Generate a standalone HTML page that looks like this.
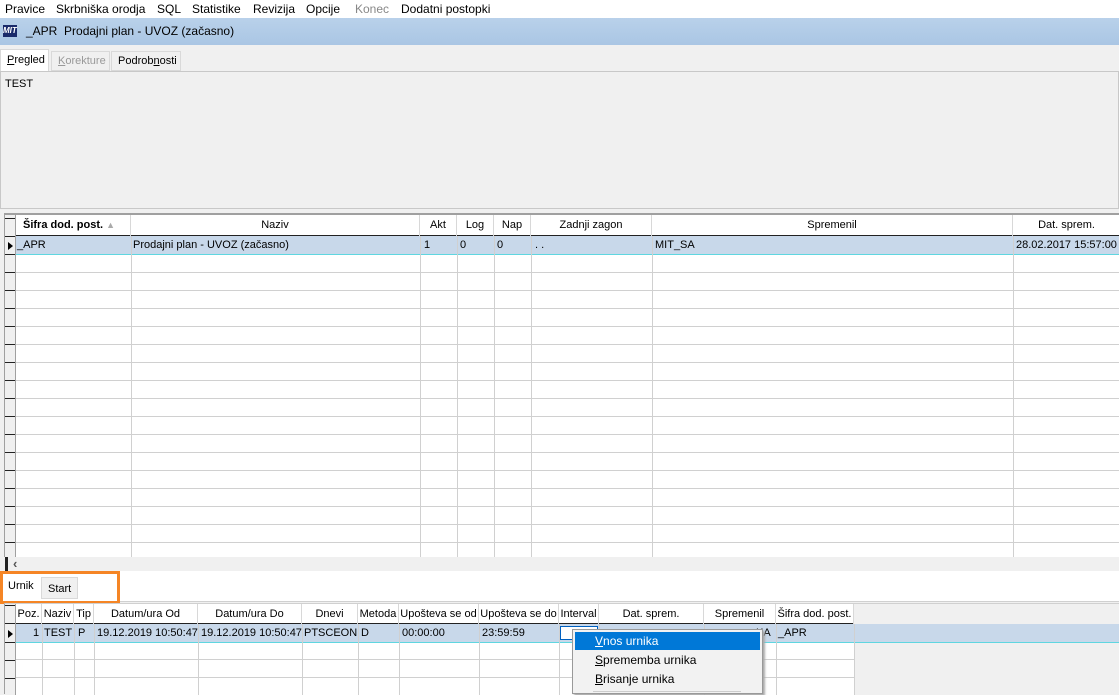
<!DOCTYPE html><html><head><style>
*{margin:0;padding:0;box-sizing:border-box}
body{width:1119px;height:694px;overflow:hidden;background:#f0f0f0;font-family:"Liberation Sans",Tahoma,sans-serif;font-size:12px;color:#000;position:relative}
.a{position:absolute;white-space:nowrap}
.vl{position:absolute;width:1px;background:#d0d0d0}
.hd{position:absolute;top:0;height:21px;line-height:21px;text-align:center;font-size:11px;border-right:1px solid #d8d8d8}
</style></head><body>
<div class="a" style="left:0;top:0;width:1119px;height:18px;background:#fff;font-size:12px;line-height:18px">
<span class="a" style="left:5px">Pravice</span><span class="a" style="left:56px">Skrbniška orodja</span><span class="a" style="left:157px">SQL</span><span class="a" style="left:192px">Statistike</span><span class="a" style="left:253px">Revizija</span><span class="a" style="left:306px">Opcije</span><span class="a" style="left:355px;color:#888">Konec</span><span class="a" style="left:401px">Dodatni postopki</span></div>
<div class="a" style="left:0;top:18px;width:1119px;height:27px;background:linear-gradient(#b9d1ea,#aac6e4);line-height:27px">
<div class="a" style="left:3px;top:7px;width:14px;height:12px;background:#1a2a6a;color:#fff;font-size:8px;font-weight:bold;line-height:12px;font-style:italic">MIT</div>
<span class="a" style="left:26px">_APR&nbsp; Prodajni plan - UVOZ (začasno)</span></div>
<div class="a" style="left:0;top:49px;width:49px;height:22px;background:#fff;border:1px solid #d9d9d9;border-bottom:none;line-height:20px;padding-left:6px;font-size:11px"><u>P</u>regled</div>
<div class="a" style="left:51px;top:51px;width:59px;height:20px;border:1px solid #d9d9d9;line-height:18px;padding-left:6px;color:#999;font-size:11px"><u>K</u>orekture</div>
<div class="a" style="left:111px;top:51px;width:70px;height:20px;border:1px solid #d9d9d9;line-height:18px;padding-left:6px;font-size:11px">Podrob<u>n</u>osti</div>
<div class="a" style="left:0;top:71px;width:1119px;height:138px;border:1px solid #c8c8c8;background:#f0f0f0"></div>
<span class="a" style="left:5px;top:78px;font-size:11px">TEST</span>
<div class="a" style="left:4px;top:213px;width:1115px;height:344px;background:#fff;border-top:2px solid #a0a0a0;border-left:1px solid #a0a0a0">
 <div class="a" style="left:0;top:0;width:11px;height:342px;background:#f0f0f0;border-right:1px solid #a0a0a0;background-image:repeating-linear-gradient(#f0f0f0 0 17px,#222 17px 18px);background-position:0 22px"></div>
 <div class="a" style="left:11px;top:0;width:1104px;height:21px;border-bottom:1px solid #222;background:#fff"></div>
 <div class="hd" style="left:11px;width:115px;text-align:left;padding-left:7px;font-weight:bold">Šifra dod. post. <span style="color:#aaa;font-size:9px">▲</span></div>
 <div class="hd" style="left:126px;width:289px">Naziv</div>
 <div class="hd" style="left:415px;width:37px">Akt</div>
 <div class="hd" style="left:452px;width:37px">Log</div>
 <div class="hd" style="left:489px;width:37px">Nap</div>
 <div class="hd" style="left:526px;width:121px">Zadnji zagon</div>
 <div class="hd" style="left:647px;width:361px">Spremenil</div>
 <div class="hd" style="left:1008px;width:107px;border:none">Dat. sprem.</div>
 <div class="a" style="left:11px;top:40px;width:1104px;height:302px;background:repeating-linear-gradient(#fff 0 17px,#d0d0d0 17px 18px)"></div>
 <div class="a" style="left:11px;top:21px;width:1104px;height:19px;background:#c8d8ea;border-bottom:1px solid #5fd6e0;font-size:11px;line-height:18px">
  <span class="a" style="left:1px">_APR</span><span class="a" style="left:117px">Prodajni plan - UVOZ (začasno)</span><span class="a" style="left:408px">1</span><span class="a" style="left:444px">0</span><span class="a" style="left:481px">0</span><span class="a" style="left:519px">. .</span><span class="a" style="left:639px">MIT_SA</span><span class="a" style="left:1000px">28.02.2017 15:57:00</span></div>
 <div class="a" style="left:3px;top:27px;width:0;height:0;border-left:5px solid #000;border-top:4px solid transparent;border-bottom:4px solid transparent"></div>
 <div class="vl" style="left:126px;top:21px;height:321px"></div><div class="vl" style="left:415px;top:21px;height:321px"></div><div class="vl" style="left:452px;top:21px;height:321px"></div><div class="vl" style="left:489px;top:21px;height:321px"></div><div class="vl" style="left:526px;top:21px;height:321px"></div><div class="vl" style="left:647px;top:21px;height:321px"></div><div class="vl" style="left:1008px;top:21px;height:321px"></div>
</div>
<div class="a" style="left:5px;top:557px;width:1114px;height:14px;background:#f0f0f0;border-left:3px solid #222"></div>
<span class="a" style="left:13px;top:556px;font-size:13px;font-weight:bold;color:#555">‹</span>
<div class="a" style="left:0;top:571px;width:1119px;height:31px;background:#fff;border-bottom:1px solid #d0d0d0"></div>
<span class="a" style="left:8px;top:580px;font-size:11px">Urnik</span>
<div class="a" style="left:41px;top:577px;width:37px;height:22px;background:#f0f0f0;border:1px solid #d9d9d9;font-size:11px;line-height:22px;padding-left:6px">Start</div>
<div class="a" style="left:0;top:571px;width:120px;height:33px;border:3px solid #f58525"></div>
<div class="a" style="left:4px;top:603px;width:1115px;height:91px;background:#f0f0f0;border-left:1px solid #a0a0a0;border-top:1px solid #d0d0d0">
 <div class="a" style="left:0;top:0;width:11px;height:91px;background:#f0f0f0;border-right:1px solid #a0a0a0;background-image:repeating-linear-gradient(#f0f0f0 0 17px,#222 17px 18px);background-position:0 21px"></div>
 <div class="a" style="left:11px;top:0;width:838px;height:20px;border-bottom:1px solid #222;background:#fff"></div>
 <div class="hd" style="left:11px;width:26px;font-size:11px;height:20px;line-height:20px">Poz.</div>
 <div class="hd" style="left:37px;width:32px;height:20px;line-height:20px">Naziv</div>
 <div class="hd" style="left:69px;width:20px;height:20px;line-height:20px">Tip</div>
 <div class="hd" style="left:89px;width:104px;height:20px;line-height:20px">Datum/ura Od</div>
 <div class="hd" style="left:193px;width:104px;height:20px;line-height:20px">Datum/ura Do</div>
 <div class="hd" style="left:297px;width:56px;height:20px;line-height:20px">Dnevi</div>
 <div class="hd" style="left:353px;width:41px;height:20px;line-height:20px">Metoda</div>
 <div class="hd" style="left:394px;width:80px;height:20px;line-height:20px">Upošteva se od</div>
 <div class="hd" style="left:474px;width:80px;height:20px;line-height:20px">Upošteva se do</div>
 <div class="hd" style="left:554px;width:40px;height:20px;line-height:20px">Interval</div>
 <div class="hd" style="left:594px;width:105px;height:20px;line-height:20px">Dat. sprem.</div>
 <div class="hd" style="left:699px;width:72px;height:20px;line-height:20px">Spremenil</div>
 <div class="hd" style="left:771px;width:78px;height:20px;line-height:20px">Šifra dod. post.</div>
 <div class="a" style="left:11px;top:38px;width:838px;height:53px;background:repeating-linear-gradient(#fff 0 17px,#d0d0d0 17px 18px)"></div>
 <div class="a" style="left:11px;top:20px;width:1104px;height:19px;background:#c8d8ea;border-bottom:1px solid #5fd6e0;font-size:11px;line-height:18px">
  <span class="a" style="left:17px">1</span><span class="a" style="left:28px">TEST</span><span class="a" style="left:62px">P</span><span class="a" style="left:81px">19.12.2019 10:50:47</span><span class="a" style="left:185px">19.12.2019 10:50:47</span><span class="a" style="left:288px">PTSCEON</span><span class="a" style="left:345px">D</span><span class="a" style="left:386px">00:00:00</span><span class="a" style="left:466px">23:59:59</span><span class="a" style="left:740px">KA</span><span class="a" style="left:762px">_APR</span>
  <div class="a" style="left:544px;top:2px;width:38px;height:14px;border:1px solid #0060c0;background:#fff"></div></div>
 <div class="a" style="left:3px;top:26px;width:0;height:0;border-left:5px solid #000;border-top:4px solid transparent;border-bottom:4px solid transparent"></div>
 <div class="vl" style="left:37px;top:20px;height:71px"></div><div class="vl" style="left:69px;top:20px;height:71px"></div><div class="vl" style="left:89px;top:20px;height:71px"></div><div class="vl" style="left:193px;top:20px;height:71px"></div><div class="vl" style="left:297px;top:20px;height:71px"></div><div class="vl" style="left:353px;top:20px;height:71px"></div><div class="vl" style="left:394px;top:20px;height:71px"></div><div class="vl" style="left:474px;top:20px;height:71px"></div><div class="vl" style="left:554px;top:20px;height:71px"></div><div class="vl" style="left:594px;top:20px;height:71px"></div><div class="vl" style="left:699px;top:20px;height:71px"></div><div class="vl" style="left:771px;top:20px;height:71px"></div><div class="vl" style="left:849px;top:20px;height:71px"></div>
</div>
<div class="a" style="left:572px;top:629px;width:191px;height:65px;background:#f2f2f2;border:1px solid #999;box-shadow:2px 2px 2px #aaa">
 <div class="a" style="left:2px;top:2px;width:185px;height:18px;background:#0078d7;color:#fff;line-height:18px;padding-left:20px"><u>V</u>nos urnika</div>
 <div class="a" style="left:22px;top:23px"><u>S</u>prememba urnika</div>
 <div class="a" style="left:22px;top:42px"><u>B</u>risanje urnika</div>
 <div class="a" style="left:20px;top:61px;width:148px;height:1px;background:#ccc"></div>
</div>
</body></html>
